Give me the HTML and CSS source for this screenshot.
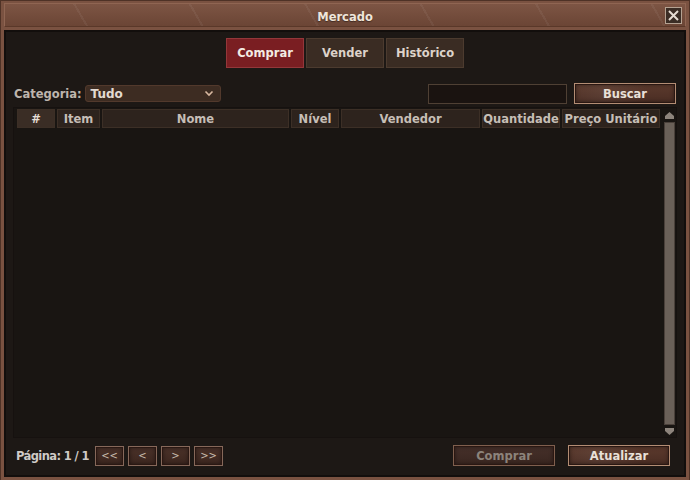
FILE: index.html
```html
<html>
<head>
	<meta charset="utf-8">
	<link rel="stylesheet" href="styles.css">
</head>
<body>
	<div class='window'>
		<div class='titlebar'>
			<div class='title'>Mercado</div>
			<div class='close'>
				<svg width="15" height="15" viewBox="0 0 15 15"><path d="M3 3 L12 12 M12 3 L3 12" stroke="#e6dcd2" stroke-width="2" fill="none"/></svg>
			</div>
		</div>

		<div class='content'>
			<div class='tabs'>
				<div class='tab active'>Comprar</div>
				<div class='tab'>Vender</div>
				<div class='tab'>Histórico</div>
			</div>

			<div class='filters'>
				<span class='label'>Categoria:</span>
				<div class='select'>
					<span>Tudo</span>
					<svg width="10" height="7" viewBox="0 0 10 7"><path d="M1.5 1.5 L5 5 L8.5 1.5" stroke="#d8b8a0" stroke-width="1.6" fill="none"/></svg>
				</div>
				<div class='spacer'></div>
				<div class='search'></div>
				<div class='btn big'>Buscar</div>
			</div>

			<div class='table'>
				<div class='grid'>
					<div class='line header'>
						<div class='cell c-num'>#</div>
						<div class='cell c-item'>Item</div>
						<div class='cell c-name'>Nome</div>
						<div class='cell c-lvl'>Nível</div>
						<div class='cell c-seller'>Vendedor</div>
						<div class='cell c-qty'>Quantidade</div>
						<div class='cell c-price'>Preço Unitário</div>
					</div>
					<div class='rows'></div>
				</div>
				<div class='scrolltrack'>
					<svg class='arrow' width="11" height="8" viewBox="0 0 11 8"><path d="M5.5 0 L10 4 L10 7 L1 7 L1 4 Z" fill="#8d847c"/></svg>
					<div class='scrollbar'></div>
					<svg class='arrow' width="11" height="8" viewBox="0 0 11 8"><path d="M1 1 L10 1 L10 4 L5.5 8 L1 4 Z" fill="#8d847c"/></svg>
				</div>
			</div>

			<div class='footer'>
				<span class='page'>Página: 1 / 1</span>
				<div class='btn nav'>&lt;&lt;</div>
				<div class='btn nav'>&lt;</div>
				<div class='btn nav'>&gt;</div>
				<div class='btn nav'>&gt;&gt;</div>
				<div class='spacer'></div>
				<div class='btn big disabled'>Comprar</div>
				<div class='btn big'>Atualizar</div>
			</div>
		</div>
	</div>
</body>
</html>
```

FILE: styles.css
```css
html {
  box-sizing: border-box;
}
*, *:before, *:after {
  box-sizing: inherit;
}

body {
	margin: 0;
	padding: 0;
	background: #1a1512;
	font-family: 'DejaVu Sans', sans-serif;
	font-size: 11.5px;
	font-weight: bold;
}

.window {
	width: 690px;
	height: 480px;
	background: #7a5241;
	border-top: 1px solid #4e3226;
	border-left: 1px solid #4e3226;
	border-right: 1px solid #4e3226;
	padding: 2px 3px 3px 3px;
	display: flex;
	flex-direction: column;
}

.titlebar {
	height: 24px;
	position: relative;
	display: flex;
	align-items: center;
	justify-content: center;
	padding-top: 4px;
	background:
		repeating-linear-gradient(60deg, rgba(255,255,255,0) 0, rgba(255,255,255,0) 70px, rgba(255,255,255,.05) 70px, rgba(255,255,255,.05) 72px, rgba(0,0,0,0) 72px, rgba(0,0,0,0) 100px),
		linear-gradient(#7d5544, #6b4535);
	border: 1px solid #8f6552;
	border-bottom-color: #5a3829;
}
.title {
	color: #efe5da;
	text-shadow: 0 1px 1px rgba(0,0,0,.4);
}
.close {
	position: absolute;
	right: 3px;
	top: 3px;
	width: 17px;
	height: 17px;
	border: 1px solid #b5a292;
	background: #3b2d25;
	display: flex;
	align-items: center;
	justify-content: center;
}

.content {
	flex: 1;
	margin-top: 3px;
	background: #1d1815;
	border: 2px solid #120e0c;
	padding: 0 7px 0 7px;
	display: flex;
	flex-direction: column;
}

.tabs {
	display: flex;
	justify-content: center;
	gap: 2px;
	margin-top: 6px;
}
.tab {
	width: 78px;
	height: 30px;
	display: flex;
	align-items: center;
	justify-content: center;
	background: #3a2c23;
	border: 1px solid #4c3b2f;
	color: #ddd3ca;
}
.tab.active {
	background: #7a1e22;
	border-color: #94373a;
	color: #f3ebe3;
}

.filters {
	display: flex;
	align-items: center;
	margin-top: 15px;
	height: 21px;
	padding-right: 1px;
}
.label {
	color: #bdb5ad;
	margin-left: 1px;
}
.select {
	margin-left: 3px;
	width: 136px;
	height: 17px;
	background: #3d2c22;
	border: 1px solid #52392c;
	border-radius: 3px;
	display: flex;
	align-items: center;
	justify-content: space-between;
	padding: 0 6px 0 5px;
	color: #e3dad2;
	font-size: 12px;
}
.spacer {
	flex: 1;
}
.search {
	width: 139px;
	height: 20px;
	background: #1a1310;
	border: 1px solid #4f4034;
	margin-right: 7px;
}

.btn {
	height: 21px;
	display: flex;
	align-items: center;
	justify-content: center;
	color: #e9e0d8;
	border: 1px solid #b38d74;
	box-shadow: inset 0 0 0 1px #2a1712, inset 0 0 5px rgba(0,0,0,.6);
	background:
		radial-gradient(circle at 30% 40%, rgba(255,255,255,.06), rgba(255,255,255,0) 60%),
		linear-gradient(#5c3a2d, #4a2d23);
}
.btn.big {
	width: 102px;
}
.btn.disabled {
	color: #8c837b;
	border-color: #7f5f4e;
	background: linear-gradient(#45302a, #3a2620);
}
.btn.nav {
	width: 29px;
	height: 20px;
	margin-left: 4px;
	color: #c9bbae;
	font-weight: normal;
	font-size: 10px;
	border-color: #86685a;
	background: linear-gradient(#4b3229, #3c261f);
}

.table {
	margin-top: 3px;
	height: 331px;
	display: flex;
	background: #191512;
	border: 1px solid #16110f;
	padding: 1px 0 0 3px;
}
.grid {
	flex: 1;
}
.line {
	display: flex;
	gap: 2px;
}
.line.header .cell {
	height: 19px;
	background: #2d231d;
	border: 1px solid #3c2f26;
	color: #c6beb6;
	display: flex;
	align-items: center;
	justify-content: center;
	white-space: nowrap;
}
.line.header .cell.c-num {
	background: #3a2d25;
	color: #e5ddd5;
}
.c-num { width: 38px; }
.c-item { width: 43px; }
.c-name { width: 187px; }
.c-lvl { width: 48px; }
.c-seller { width: 139px; }
.c-qty { width: 78px; }
.c-price { width: 98px; }

.scrolltrack {
	width: 11px;
	margin: 3px 2px 2px 4px;
	display: flex;
	flex-direction: column;
	align-items: center;
}
.scrollbar {
	flex: 1;
	width: 11px;
	margin: 2px 0;
	background: #6a6058;
	border: 1px solid #4a403a;
}

.footer {
	flex: 1;
	display: flex;
	align-items: center;
	padding: 0 7px 2px 3px;
}
.page {
	color: #cfcac6;
	letter-spacing: -0.6px;
	margin-right: 2px;
}
.footer .btn.big {
	height: 21px;
	margin-left: 13px;
}
```
